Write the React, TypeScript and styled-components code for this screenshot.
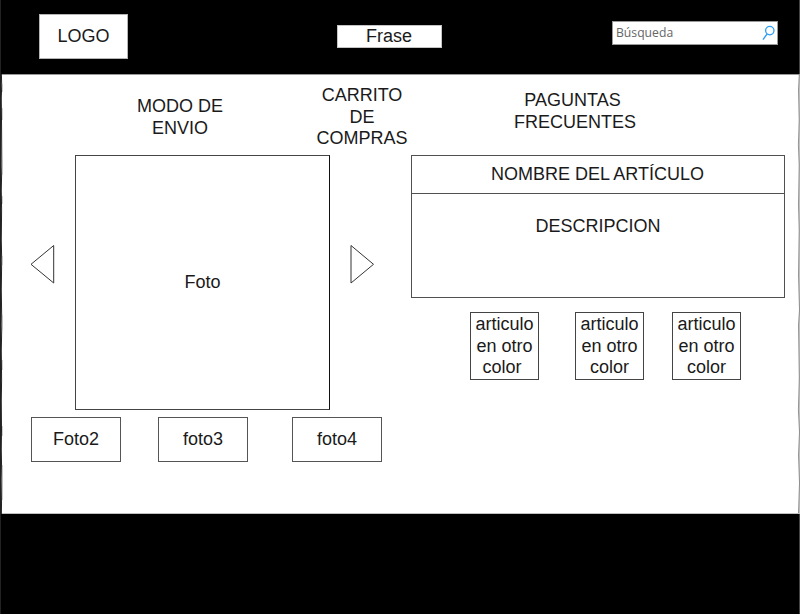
import React from "react";
import styled, { createGlobalStyle } from "styled-components";

const GlobalStyle = createGlobalStyle`
  * { box-sizing: border-box; }
  body { margin: 0; background: #000; }
`;

const Page = styled.div`
  position: relative;
  display: flex;
  flex-direction: column;
  width: 800px;
  height: 614px;
  overflow: hidden;
  background: #000;
  color: #1a1a1a;
  font-family: "Liberation Sans", Arial, sans-serif;
  font-size: 18px;
  line-height: 21.6px;
`;

const Header = styled.header`
  display: flex;
  align-items: flex-start;
  height: 74px;
  padding-left: 39px;
`;

const Logo = styled.div`
  display: flex;
  align-items: center;
  justify-content: center;
  width: 89px;
  height: 45px;
  margin-top: 14px;
  background: #fff;
  border: 1px solid #b5b5b5;
`;

const Phrase = styled.div`
  width: 105px;
  height: 23px;
  margin: 25px 0 0 209px;
  padding-right: 1px;
  background: #fff;
  border: 1px solid #c4c4c4;
  text-align: center;
  line-height: 21px;
`;

const Search = styled.label`
  display: flex;
  align-items: center;
  justify-content: space-between;
  width: 166px;
  height: 24px;
  margin: 21px 0 0 170px;
  padding: 0 1px 0 3px;
  background: #fff;
  border: 1px solid #999;
`;

const SearchInput = styled.input`
  width: 110px;
  padding: 0 0 2px;
  border: 0;
  outline: 0;
  background: transparent;
  font: 12.2px "Open Sans", "Noto Sans", sans-serif;
  &::placeholder { color: #666; opacity: 1; }
`;

const Main = styled.main`
  height: 440px;
  background: #fff;
  border-top: 1px solid #999;
  border-bottom: 1px solid #c0c0c0;
`;

const Nav = styled.nav`
  display: flex;
  align-items: center;
  height: 80px;
  padding: 5px 0 0 120px;
`;

const NavItem = styled.div<{ $width: number; $gap?: number; $drop?: number }>`
  width: ${(p) => p.$width}px;
  margin-left: ${(p) => p.$gap ?? 0}px;
  padding-bottom: ${(p) => p.$drop ?? 0}px;
  text-align: center;
  white-space: pre;
`;

const Content = styled.div`
  display: flex;
  align-items: flex-start;
`;

const Gallery = styled.section`
  width: 411px;
  padding-left: 30px;
`;

const Viewer = styled.div`
  display: flex;
  height: 255px;
`;

const Arrow = styled.svg`
  width: 25px;
  height: 41px;
  margin-top: 89px;
  fill: #fff;
  stroke: #333;
  stroke-width: 1;
`;

const Photo = styled.div`
  display: flex;
  align-items: center;
  justify-content: center;
  width: 255px;
  height: 255px;
  margin: 0 20px;
  border: 1px solid #444;
  border-right-color: #111;
`;

const Thumbs = styled.div`
  display: flex;
  margin: 7px 0 0 1px;
`;

const Thumb = styled.div<{ $gap?: number }>`
  display: flex;
  align-items: center;
  justify-content: center;
  width: 90px;
  height: 45px;
  margin-left: ${(p) => p.$gap ?? 0}px;
  border: 1px solid #555;
`;

const Details = styled.section`
  width: 374px;
`;

const Card = styled.div`
  height: 143px;
  border: 1px solid #505050;
  text-align: center;
`;

const Title = styled.div`
  height: 38px;
  padding: 8px 1px 0 0;
  border-bottom: 1px solid #505050;
`;

const Description = styled.div`
  padding-top: 22px;
`;

const Variants = styled.div`
  display: flex;
  margin: 14px 0 0 59px;
`;

const Variant = styled.div<{ $gap?: number }>`
  width: 69px;
  height: 68px;
  margin-left: ${(p) => p.$gap ?? 0}px;
  padding-top: 1px;
  border: 1px solid #444;
  text-align: center;
  white-space: pre;
`;

const Edges = styled.svg`
  position: absolute;
  inset: 0;
  pointer-events: none;
  fill: none;
`;

function SearchIcon() {
  return (
    <svg width="14" height="16" viewBox="0 0 14 16" fill="none" stroke="#2b9df4" strokeWidth="1.3">
      <circle cx="7.8" cy="5.6" r="4.2" />
      <path d="M5.1 8.8 1 14.6" strokeWidth="1.4" />
    </svg>
  );
}

export default function App() {
  return (
    <>
      <GlobalStyle />
      <Page>
        <Header>
          <Logo>LOGO</Logo>
          <Phrase>Frase</Phrase>
          <Search>
            <SearchInput placeholder="Búsqueda" aria-label="Búsqueda" />
            <SearchIcon />
          </Search>
        </Header>
        <Main>
          <Nav>
            <NavItem $width={120}>{"MODO DE\nENVIO"}</NavItem>
            <NavItem $width={120} $gap={62}>{"CARRITO\nDE\nCOMPRAS"}</NavItem>
            <NavItem $width={140} $gap={83} $drop={12}>{"PAGUNTAS\u00a0\nFRECUENTES"}</NavItem>
          </Nav>
          <Content>
            <Gallery>
              <Viewer>
                <Arrow viewBox="0 0 25 41"><path d="M1 20.3 23.7 1.5V39Z" /></Arrow>
                <Photo>Foto</Photo>
                <Arrow viewBox="0 0 25 41"><path d="M23.5 20.3 1 1.5V39Z" /></Arrow>
              </Viewer>
              <Thumbs>
                <Thumb>Foto2</Thumb>
                <Thumb $gap={37}>foto3</Thumb>
                <Thumb $gap={44}>foto4</Thumb>
              </Thumbs>
            </Gallery>
            <Details>
              <Card>
                <Title>NOMBRE DEL ARTÍCULO</Title>
                <Description>DESCRIPCION</Description>
              </Card>
              <Variants>
                <Variant>{"articulo\nen otro\ncolor\u00a0"}</Variant>
                <Variant $gap={36}>{"articulo\nen otro\ncolor"}</Variant>
                <Variant $gap={28}>{"articulo\nen otro\ncolor"}</Variant>
              </Variants>
            </Details>
          </Content>
        </Main>
        <Edges width="800" height="614" viewBox="0 0 800 614">
          <path d="M.5 0V614" stroke="#222" />
          <path d="M1.4 74L1.7 85 1.3 98 1.6 130 1.8 165 1.3 190 1.6 210 1.3 240 1.7 260 1.3 290 1.8 325 1.3 350 1.6 380 1.3 400 1.5 430 1.3 450 1.8 480 1.4 514" stroke="#222" />
          <path d="M2.5 84V92M2.5 108V120M2.5 160V175M2.5 196V204M2.5 256V265M2.5 315V330M2.5 360V370M2.5 426V436M2.5 465V500" stroke="#bbb" strokeWidth=".7" />
          <path d="M799.5 74V514" stroke="#c4c4c4" />
          <path d="M799.3 74L798.5 90 799.2 120 798.4 145 799.2 165 798.5 205 799.2 230 798.5 275 799.5 310 798.5 325 799.3 378 798.4 410 799.5 432 798.5 455 799.5 483 798.5 513" stroke="#888" strokeWidth=".9" />
          <path d="M799.5 0V74M799.5 514V614" stroke="#444" />
        </Edges>
      </Page>
    </>
  );
}
